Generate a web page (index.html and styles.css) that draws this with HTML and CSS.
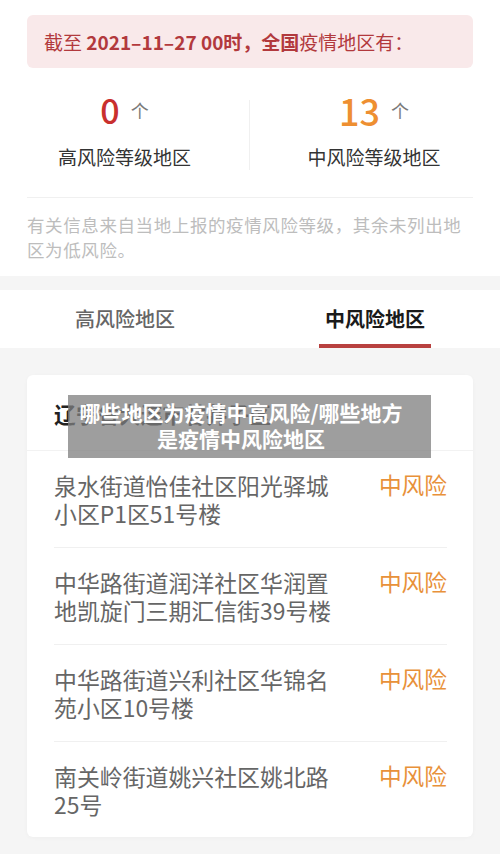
FILE: index.html
```html
<!DOCTYPE html>
<html lang="zh">
<head>
<meta charset="utf-8">
<link rel="stylesheet" href="styles.css">
</head>
<body>
<section class="top">
  <div class="banner"><span>截至 </span><b>2021–11–27 00时，全国</b><span>疫情地区有：</span></div>
  <div class="stats">
    <div class="stat">
      <div class="num"><span class="n high">0</span><span class="unit">个</span></div>
      <div class="label">高风险等级地区</div>
    </div>
    <div class="stat sep">
      <div class="num"><span class="n mid">13</span><span class="unit">个</span></div>
      <div class="label">中风险等级地区</div>
    </div>
  </div>
  <div class="rule"></div>
  <p class="note">有关信息来自当地上报的疫情风险等级，其余未列出地区为低风险。</p>
</section>

<nav class="tabs">
  <div class="tab"><span class="tab-label">高风险地区</span></div>
  <div class="tab active"><span class="tab-label">中风险地区</span></div>
</nav>

<section class="card">
  <div class="card-head">辽宁省大连市甘井子区</div>
  <ul class="list">
    <li class="row"><span class="place">泉水街道怡佳社区阳光驿城小区P1区51号楼</span><span class="risk">中风险</span></li>
    <li class="row"><span class="place">中华路街道润洋社区华润置地凯旋门三期汇信街39号楼</span><span class="risk">中风险</span></li>
    <li class="row"><span class="place">中华路街道兴利社区华锦名苑小区10号楼</span><span class="risk">中风险</span></li>
    <li class="row"><span class="place">南关岭街道姚兴社区姚北路25号</span><span class="risk">中风险</span></li>
  </ul>
</section>

<div class="caption">哪些地区为疫情中高风险/哪些地方是疫情中风险地区</div>
</body>
</html>
```

FILE: styles.css
```css
* { box-sizing: border-box; }
html, body { margin: 0; padding: 0; }
body {
  width: 500px;
  height: 854px;
  overflow: hidden;
  background: #f5f5f5;
  font-family: "Noto Sans CJK SC", "Noto Sans", sans-serif;
  position: relative;
}
.top {
  background: #fff;
  padding: 15px 27px 14px;
}
.banner {
  height: 53px;
  background: #f9e9ea;
  border-radius: 6px;
  padding-left: 17px;
  display: flex;
  align-items: center;
  font-size: 19px;
  color: #b2393d;
  white-space: pre;
}
.banner b { font-weight: 700; }
.stats {
  display: grid;
  grid-template-columns: 1fr 1fr;
  margin: 32px -25px 0 -27px;
}
.stat {
  display: flex;
  flex-direction: column;
  align-items: center;
}
.stat.sep { border-left: 1px solid #f0f0f0; }
.num {
  margin-top: -10px;
  height: 40px;
  display: flex;
  align-items: center;
  gap: 11px;
}
.n { font-size: 34px; font-weight: 500; line-height: 40px; }
.n.mid { font-size: 36px; }
.n.high { color: #c9302e; }
.n.mid { color: #ee8f31; }
.unit { font-size: 18px; color: #7a7a7a; line-height: 40px; }
.label {
  margin-top: 14px;
  font-size: 19px;
  line-height: 26px;
  color: #333;
}
.rule {
  margin-top: 27px;
  height: 1px;
  background: #f0f0f0;
}
.note {
  margin: 14px 0 0;
  font-size: 17.5px;
  letter-spacing: 0.6px;
  line-height: 25px;
  color: #bdbdbd;
}
.tabs {
  margin-top: 14px;
  background: #fff;
  display: flex;
  height: 58px;
}
.tab {
  flex: 1;
  display: flex;
  justify-content: center;
  padding-top: 15px;
}
.tab-label {
  display: inline-block;
  padding: 0 6px 11px;
  font-size: 20px;
  line-height: 28px;
  font-weight: 500;
  color: #666;
  border-bottom: 4px solid transparent;
  height: 43px;
}
.tab.active .tab-label {
  color: #1a1a1a;
  font-weight: 700;
  border-bottom-color: #b8413f;
}
.card {
  margin: 27px 27px 0;
  background: #fff;
  border-radius: 6px;
  box-shadow: 0 1px 4px rgba(0,0,0,0.03);
}
.card-head {
  height: 76px;
  padding: 24px 0 0 27px;
  font-size: 21.7px;
  line-height: 30px;
  font-weight: 700;
  color: #222;
  border-bottom: 1px solid #f2f2f2;
}
.list {
  list-style: none;
  margin: 0 26px 0 27px;
  padding: 0;
}
.row {
  display: flex;
  justify-content: space-between;
  align-items: flex-start;
  padding: 20px 0 20px;
  border-bottom: 1px solid #f0f0f0;
}
.row:last-child { border-bottom: none; padding-bottom: 19px; }
.place {
  max-width: 290px;
  font-size: 22.9px;
  line-height: 28px;
  color: #666;
}
.risk {
  font-size: 22.7px;
  line-height: 28px;
  color: #e8913a;
  white-space: nowrap;
}
.caption {
  position: absolute;
  left: 68px;
  top: 395px;
  width: 363px;
  height: 63px;
  padding: 4px 25px 0 8px;
  background: rgba(128,128,128,0.76);
  color: #fff;
  font-weight: 700;
  font-size: 21px;
  line-height: 26px;
  text-align: center;
}
```
